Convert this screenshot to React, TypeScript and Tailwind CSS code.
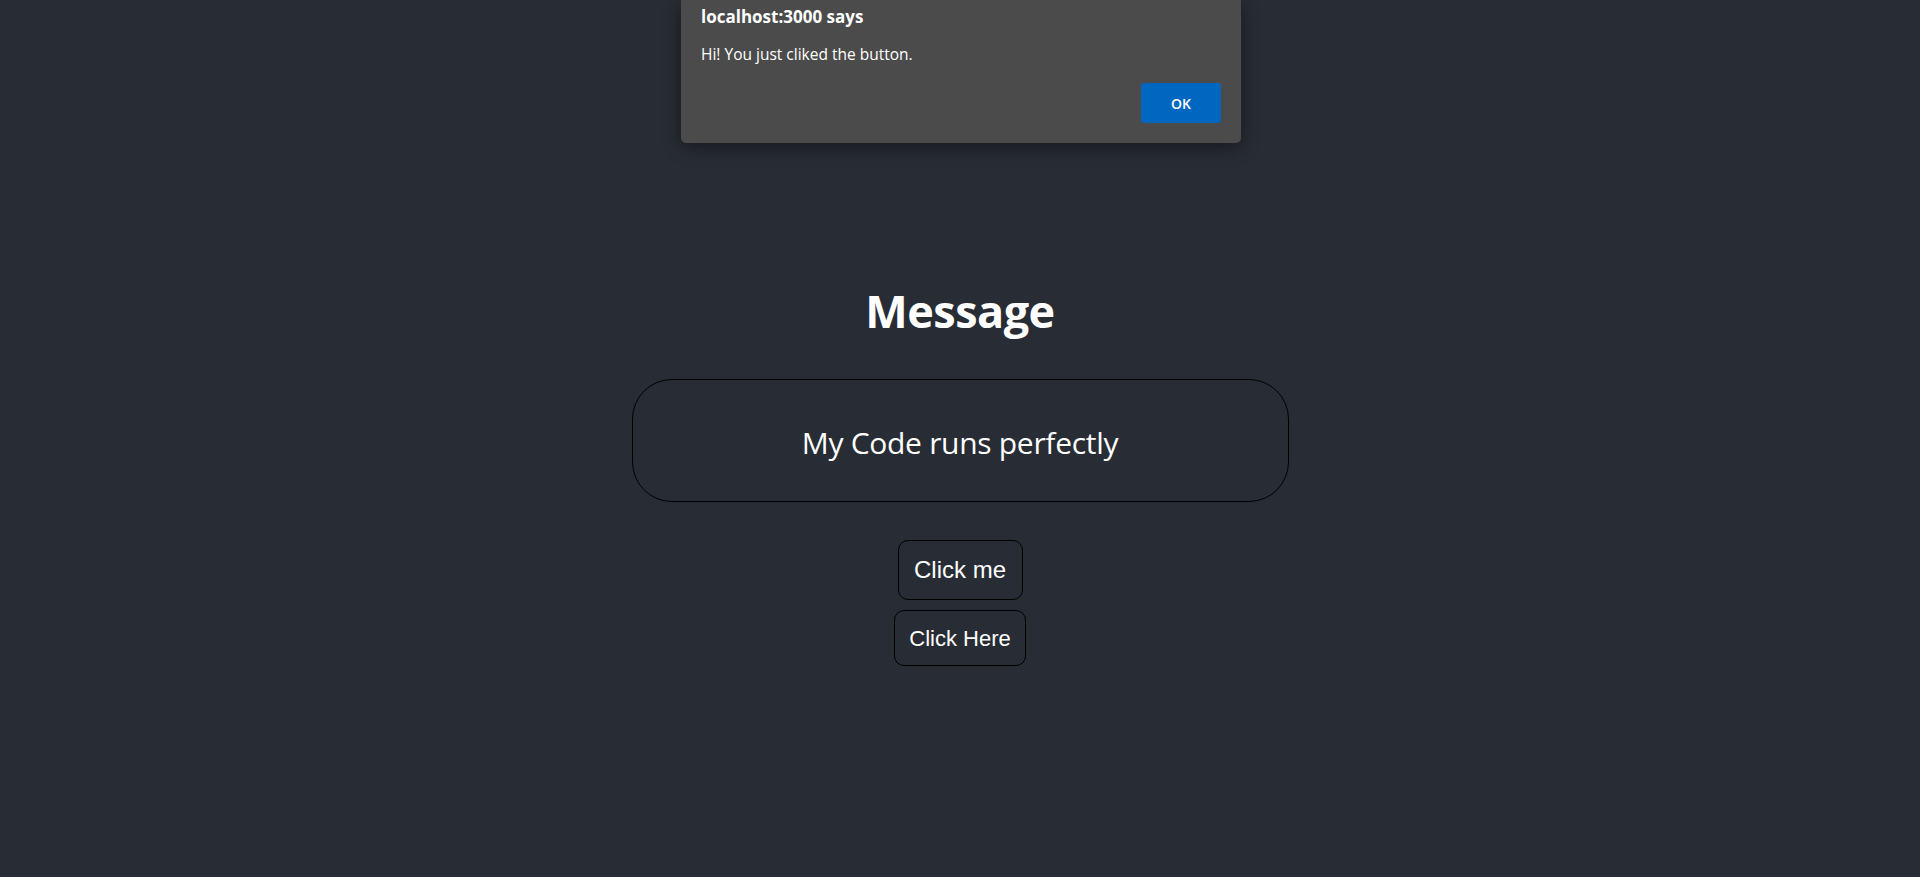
export default function App() {
  return (
    <div className="relative w-full h-[877px] bg-[#282c34] overflow-hidden font-['Open_Sans',sans-serif] text-white">
      {/* alert dialog */}
      <div className="absolute left-[681px] top-0 w-[560px] h-[143px] bg-[#4b4b4b] rounded-b-[5px] shadow-[0_4px_18px_rgba(0,0,0,0.45)] flex flex-col px-5">
        <div className="pt-[5px] text-[17px] leading-[24px] font-bold">localhost:3000 says</div>
        <div className="mt-[14px] text-[15.5px] leading-[22px]">Hi! You just cliked the button.</div>
        <div className="flex justify-end mt-[18px]">
          <button className="w-20 h-10 bg-[#0067c0] rounded-[3px] text-[14px] font-semibold text-white">OK</button>
        </div>
      </div>

      {/* page content */}
      <div className="flex flex-col items-center pt-[281px]">
        <h1 className="text-[45px] leading-[60px] font-bold tracking-[-0.5px]">Message</h1>
        <div className="mt-[38px] w-[657px] h-[123px] rounded-[40px] border border-black flex items-center justify-center">
          <p className="mt-[5px] text-[30px] leading-[40px] tracking-[-0.3px]">My Code runs perfectly</p>
        </div>
        <button className="mt-[38px] w-[125px] h-[60px] rounded-[10px] border border-black bg-[#282c34] text-[24px] font-['Liberation_Sans',Arial,sans-serif] text-white">
          Click me
        </button>
        <button className="mt-[10px] w-[132px] h-[56px] rounded-[10px] border border-black bg-[#282c34] text-[22px] font-['Liberation_Sans',Arial,sans-serif] text-white">
          Click Here
        </button>
      </div>
    </div>
  );
}
